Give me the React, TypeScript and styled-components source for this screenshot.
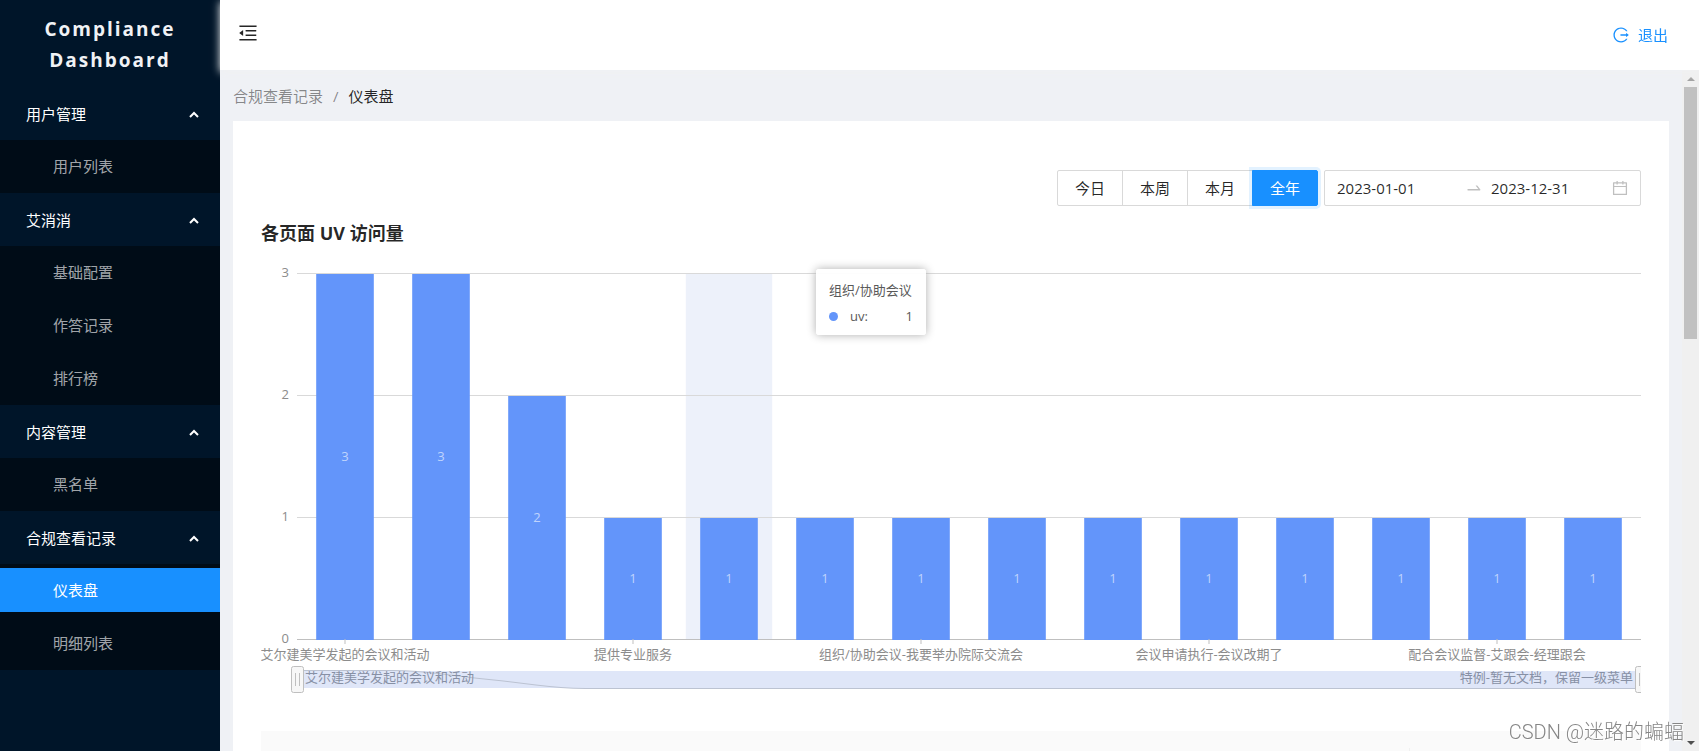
import React, { useLayoutEffect, useRef, useState } from 'react';
import styled, { createGlobalStyle, css } from 'styled-components';
import {
  AiOutlineCalendar,
  AiOutlineLogout,
  AiOutlineMenuFold,
  AiOutlineSwapRight,
} from 'react-icons/ai';

const GlobalStyle = createGlobalStyle`
  *, *::before, *::after { box-sizing: border-box; }
  body {
    margin: 0;
    font-family: "Open Sans", "Noto Sans CJK SC", sans-serif;
    font-size: 15px;
    line-height: 24px;
    color: rgba(0, 0, 0, 0.85);
    background: #f0f2f5;
  }
  button, input { font: inherit; color: inherit; }
`;

/* ---------- layout ---------- */

const Layout = styled.div`
  display: flex;
  height: 100vh;
  overflow: hidden;
`;

const Sider = styled.aside`
  flex: 0 0 220px;
  background: #001529;
  color: #fff;
`;

const Brand = styled.h1`
  margin: 0;
  padding: 14px 32px 11px;
  color: #f0f2f5;
  font-size: 19px;
  font-weight: 700;
  line-height: 31px;
  letter-spacing: 2px;
  text-align: center;
`;

const Main = styled.div`
  flex: 1;
  min-width: 0;
  display: flex;
  flex-direction: column;
`;

const Header = styled.header`
  z-index: 1;
  flex: 0 0 70px;
  display: flex;
  align-items: center;
  justify-content: space-between;
  padding: 0 31px 0 17px;
  background: #fff;
  box-shadow: 0 2px 8px #f0f1f2;
`;

const IconButton = styled.button`
  display: flex;
  padding: 0;
  border: 0;
  background: none;
  font-size: 22px;
  margin-bottom: 4px;
  cursor: pointer;
`;

const LogoutLink = styled.a`
  display: flex;
  align-items: center;
  gap: 8px;
  color: #1890ff;
  text-decoration: none;
  svg { font-size: 18px; }
`;

const Body = styled.div`
  flex: 1;
  min-height: 0;
  display: flex;
`;

const Content = styled.main`
  flex: 1;
  min-width: 0;
  padding: 0 13px;
  overflow-y: auto;
  scrollbar-width: none;
  background: #eff1f5;
`;

const Card = styled.section`
  padding: 49px 28px 28px;
  background: #fff;
`;

/* ---------- side menu ---------- */

const MenuList = styled.ul`
  margin: 0;
  padding: 0;
  list-style: none;
`;

const SubMenuList = styled(MenuList)`
  background: #000c17;
`;

const GroupButton = styled.button`
  display: flex;
  align-items: center;
  justify-content: space-between;
  width: 100%;
  height: 53px;
  padding: 0 20px 0 26px;
  border: 0;
  background: none;
  color: #fff;
  cursor: pointer;
`;

const MenuItem = styled.li`
  padding: 4px 0 5px;
`;

const MenuLink = styled.a<{ $active?: boolean }>`
  display: flex;
  align-items: center;
  height: 44px;
  padding-left: 53px;
  text-decoration: none;
  color: ${(p) => (p.$active ? '#fff' : 'rgba(255, 255, 255, 0.65)')};
  background: ${(p) => (p.$active ? '#1890ff' : 'none')};
`;

/* ---------- breadcrumb ---------- */

const Breadcrumb = styled.nav`
  display: flex;
  align-items: center;
  height: 51px;
  a {
    color: rgba(0, 0, 0, 0.45);
    text-decoration: none;
  }
`;

const Separator = styled.span`
  margin: 0 10px;
  color: rgba(0, 0, 0, 0.45);
`;

/* ---------- toolbar ---------- */

const Toolbar = styled.div`
  display: flex;
  justify-content: flex-end;
  gap: 6px;
`;

const Segmented = styled.div`
  display: flex;
`;

const Segment = styled.button<{ $active?: boolean }>`
  width: 66px;
  height: 36px;
  padding: 0;
  border: 1px solid #d9d9d9;
  background: #fff;
  cursor: pointer;
  & + & { margin-left: -1px; }
  &:first-child { border-radius: 2px 0 0 2px; }
  &:last-child { border-radius: 0 2px 2px 0; }
  ${(p) =>
    p.$active &&
    css`
      z-index: 1;
      border-color: #1890ff;
      background: #1890ff;
      color: #fff;
      box-shadow: 0 0 0 3px rgba(24, 144, 255, 0.12);
    `}
`;

const RangePicker = styled.div`
  display: flex;
  align-items: center;
  width: 317px;
  height: 36px;
  padding: 0 11px 0 12px;
  border: 1px solid #d9d9d9;
  border-radius: 2px;
  background: #fff;
  svg {
    flex: none;
    color: #bfbfbf;
    font-size: 18px;
  }
`;

const DateInput = styled.input`
  flex: 1;
  min-width: 0;
  padding: 0;
  border: 0;
  outline: 0;
  background: none;
`;

const PickerArrow = styled.span`
  display: flex;
  padding: 0 8px;
`;

/* ---------- chart ---------- */

const ChartTitle = styled.h2`
  margin: 13px 0 0;
  font-size: 18px;
  font-weight: 700;
  line-height: 28px;
`;

const ChartBox = styled.div`
  position: relative;
  height: 456px;
`;

const ChartSvg = styled.svg`
  display: block;
  width: 100%;
  height: 100%;
  overflow: hidden;
  font-size: 13px;
  text {
    fill: #8c8c8c;
    dominant-baseline: central;
  }
  .value { fill: rgba(255, 255, 255, 0.6); }
  .range { fill: #8790a5; }
`;

const Tooltip = styled.div`
  position: absolute;
  top: 22px;
  width: 110px;
  padding: 8px 13px 6px;
  border-radius: 3px;
  background: rgba(255, 255, 255, 0.95);
  box-shadow: 0 0 10px #aeaeae;
  color: #595959;
  font-size: 13px;
  line-height: 26px;
  white-space: nowrap;
`;

const TooltipRow = styled.div`
  display: flex;
  align-items: center;
`;

const TooltipDot = styled.span`
  width: 9px;
  height: 9px;
  margin-right: 12px;
  border-radius: 50%;
  background: #6395fa;
`;

const TooltipValue = styled.span`
  margin-left: auto;
`;

/* ---------- table ---------- */

const RecordTable = styled.table`
  width: 100%;
  margin-top: 28px;
  border-spacing: 0;
  table-layout: fixed;
  th {
    height: 60px;
    padding: 0;
    background: #fafafa;
  }
  th:last-child { width: 232px; }
  th:last-child::before {
    content: "";
    display: block;
    width: 1px;
    height: 26px;
    background: #f0f0f0;
  }
`;

/* ---------- scrollbar and watermark ---------- */

const ScrollTrack = styled.div`
  flex: 0 0 17px;
  display: flex;
  flex-direction: column;
  align-items: center;
  background: #f0f0f0;
`;

const ScrollArrow = styled.div<{ $down?: boolean }>`
  height: 17px;
  display: flex;
  align-items: center;
  margin-top: ${(p) => (p.$down ? 'auto' : '0')};
  &::before {
    content: "";
    border: 4px solid transparent;
    ${(p) =>
      p.$down
        ? 'border-top-color: #505050; border-bottom: 0;'
        : 'border-bottom-color: #a3a3a3; border-top: 0;'}
  }
`;

const ScrollThumb = styled.div`
  width: 13px;
  height: 37%;
  background: #c1c1c1;
`;

const Watermark = styled.div`
  position: fixed;
  right: 15px;
  bottom: 4px;
  z-index: 2;
  font-family: Roboto, "Noto Sans CJK SC", sans-serif;
  font-size: 20px;
  font-weight: 300;
  line-height: 30px;
  color: #868686;
  text-shadow: 1px 1px 1px #fff;
  pointer-events: none;
`;

/* ---------- data ---------- */

const MENU = [
  { title: '用户管理', items: ['用户列表'] },
  { title: '艾消消', items: ['基础配置', '作答记录', '排行榜'] },
  { title: '内容管理', items: ['黑名单'] },
  { title: '合规查看记录', items: ['仪表盘', '明细列表'] },
];

const ACTIVE_ITEM = '仪表盘';
const PERIODS = ['今日', '本周', '本月', '全年'];
const VALUES = [3, 3, 2, 1, 1, 1, 1, 1, 1, 1, 1, 1, 1, 1];
const TREND_VALUES = [...VALUES, 1];

const X_LABELS: Record<number, string> = {
  0: '艾尔建美学发起的会议和活动',
  3: '提供专业服务',
  6: '组织/协助会议-我要举办院际交流会',
  9: '会议申请执行-会议改期了',
  12: '配合会议监督-艾跟会-经理跟会',
};

const HOVERED = 4;
const PLOT_LEFT = 36;
const BASELINE = 392;
const UNIT = 122;
const TREND_TOP = 424;
const TREND_HEIGHT = 17;

const Chevron = () => (
  <svg width="12" height="12" viewBox="0 0 12 12" fill="none" aria-hidden="true">
    <path d="M2 9 6 5l4 4" stroke="#fff" strokeWidth="2" />
  </svg>
);

const Handle = ({ x }: { x: number }) => (
  <g stroke="#bfbfbf">
    <rect x={x - 5.5} y={419.5} width={12} height={26} rx={2} fill="#f7f7f7" />
    <path d={`M${x - 1.5} 426v13M${x + 2.5} 426v13`} />
  </g>
);

/* Smooth line through the page values, drawn inside the range slider. */
function trendPath(width: number) {
  const step = (width - PLOT_LEFT) / (TREND_VALUES.length - 1);
  const pts = TREND_VALUES.map((v, i) => [
    PLOT_LEFT + i * step,
    TREND_TOP - 0.5 + ((3 - v) / 2) * (TREND_HEIGHT + 1),
  ]);
  const slope = (i: number) => {
    const a = pts[Math.max(i - 1, 0)][1];
    const b = pts[i][1];
    const c = pts[Math.min(i + 1, pts.length - 1)][1];
    return (b - a) * (c - b) > 0 ? (c - a) / 2 : 0;
  };
  return pts.reduce((d, [x, y], i) => {
    if (i === 0) return `M${x} ${y}`;
    const [px, py] = pts[i - 1];
    return `${d}C${px + step / 3} ${py + slope(i - 1) / 3} ${x - step / 3} ${y - slope(i) / 3} ${x} ${y}`;
  }, '');
}

function UvChart() {
  const box = useRef<HTMLDivElement>(null);
  const [width, setWidth] = useState(0);

  useLayoutEffect(() => {
    const el = box.current;
    if (!el) return;
    const update = () => setWidth(el.clientWidth);
    update();
    const observer = new ResizeObserver(update);
    observer.observe(el);
    return () => observer.disconnect();
  }, []);

  const band = Math.max(width - PLOT_LEFT, 0) / VALUES.length;
  const center = (i: number) => PLOT_LEFT + band * (i + 0.5);

  return (
    <ChartBox ref={box}>
      {width > 0 && (
        <>
          <ChartSvg role="img" aria-label="各页面 UV 访问量">
            <rect
              x={center(HOVERED) - band * 0.45}
              y={BASELINE - 3 * UNIT}
              width={band * 0.9}
              height={3 * UNIT}
              fill="#edf1fa"
            />
            {[0, 1, 2, 3].map((n) => {
              const y = BASELINE - n * UNIT;
              return (
                <g key={n}>
                  <line x1={PLOT_LEFT} x2={width} y1={y + 0.5} y2={y + 0.5} stroke={n ? '#d9d9d9' : '#bfbfbf'} />
                  <text x={28} y={y - 1} textAnchor="end">{n}</text>
                </g>
              );
            })}
            {VALUES.map((v, i) => (
              <g key={i}>
                <rect
                  x={center(i) - band * 0.3}
                  y={BASELINE - v * UNIT + 1}
                  width={band * 0.6}
                  height={v * UNIT}
                  fill="#6395fa"
                />
                <text className="value" x={center(i)} y={BASELINE - (v * UNIT) / 2} textAnchor="middle">
                  {v}
                </text>
                {X_LABELS[i] && (
                  <>
                    <line x1={center(i)} x2={center(i)} y1={BASELINE} y2={BASELINE + 5} stroke="#bfbfbf" />
                    <text x={center(i)} y={407} textAnchor="middle">{X_LABELS[i]}</text>
                  </>
                )}
              </g>
            ))}
            <rect x={PLOT_LEFT} y={TREND_TOP} width={width - PLOT_LEFT} height={TREND_HEIGHT} fill="#dfe6f8" />
            <path d={trendPath(width)} fill="none" stroke="#bcc3d2" />
            <text className="range" x={44} y={430}>艾尔建美学发起的会议和活动</text>
            <text className="range" x={width - 8} y={430} textAnchor="end">
              特例-暂无文档，保留一级菜单
            </text>
            <Handle x={PLOT_LEFT} />
            <Handle x={width} />
          </ChartSvg>
          <Tooltip style={{ left: center(HOVERED) + 87 }}>
            <div>组织/协助会议</div>
            <TooltipRow>
              <TooltipDot />
              uv:
              <TooltipValue>1</TooltipValue>
            </TooltipRow>
          </Tooltip>
        </>
      )}
    </ChartBox>
  );
}

export default function App() {
  const [period, setPeriod] = useState('全年');

  return (
    <>
      <GlobalStyle />
      <Layout>
        <Sider>
          <Brand>Compliance Dashboard</Brand>
          <MenuList>
            {MENU.map((group) => (
              <li key={group.title}>
                <GroupButton type="button" aria-expanded="true">
                  {group.title}
                  <Chevron />
                </GroupButton>
                <SubMenuList>
                  {group.items.map((item) => (
                    <MenuItem key={item}>
                      <MenuLink href="#" $active={item === ACTIVE_ITEM}>{item}</MenuLink>
                    </MenuItem>
                  ))}
                </SubMenuList>
              </li>
            ))}
          </MenuList>
        </Sider>
        <Main>
          <Header>
            <IconButton type="button" aria-label="收起菜单">
              <AiOutlineMenuFold />
            </IconButton>
            <LogoutLink href="#">
              <AiOutlineLogout />
              退出
            </LogoutLink>
          </Header>
          <Body>
            <Content>
              <Breadcrumb>
                <a href="#">合规查看记录</a>
                <Separator>/</Separator>
                <span>仪表盘</span>
              </Breadcrumb>
              <Card>
                <Toolbar>
                  <Segmented>
                    {PERIODS.map((p) => (
                      <Segment key={p} type="button" $active={p === period} onClick={() => setPeriod(p)}>
                        {p}
                      </Segment>
                    ))}
                  </Segmented>
                  <RangePicker>
                    <DateInput aria-label="开始日期" defaultValue="2023-01-01" />
                    <PickerArrow>
                      <AiOutlineSwapRight />
                    </PickerArrow>
                    <DateInput aria-label="结束日期" defaultValue="2023-12-31" />
                    <AiOutlineCalendar />
                  </RangePicker>
                </Toolbar>
                <ChartTitle>各页面 UV 访问量</ChartTitle>
                <UvChart />
                <RecordTable>
                  <thead>
                    <tr>
                      <th />
                      <th />
                    </tr>
                  </thead>
                </RecordTable>
              </Card>
            </Content>
            <ScrollTrack>
              <ScrollArrow />
              <ScrollThumb />
              <ScrollArrow $down />
            </ScrollTrack>
          </Body>
        </Main>
      </Layout>
      <Watermark>CSDN @迷路的蝙蝠</Watermark>
    </>
  );
}
